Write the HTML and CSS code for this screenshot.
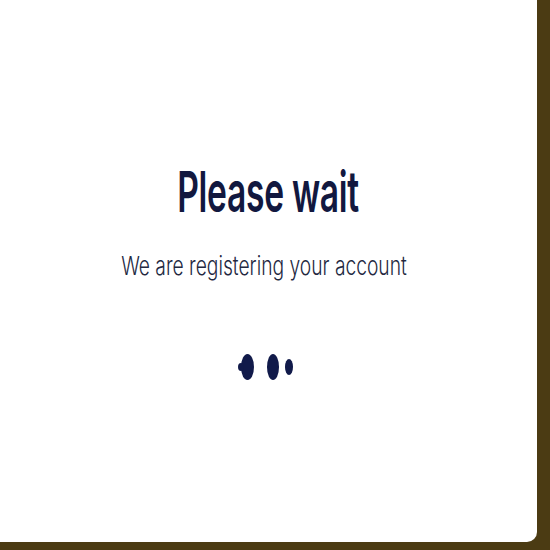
FILE: index.html
```html
<!DOCTYPE html>
<html>
<head>
<meta charset="utf-8">
<link rel="stylesheet" href="styles.css">
</head>
<body>
<div class="card">
  <h1 class="title">Please wait</h1>
  <p class="subtitle">We are registering your account</p>
  <div class="dots">
    <span class="dot dot-a"><span class="ghost"></span></span>
    <span class="dot dot-b"></span>
    <span class="dot dot-c"></span>
  </div>
</div>
</body>
</html>
```
FILE: styles.css
```css
html, body {
  margin: 0;
  padding: 0;
  background: #4b3b13;
  width: 550px;
  height: 550px;
  overflow: hidden;
}
.card {
  width: 537px;
  height: 542px;
  background: #ffffff;
  border-bottom-right-radius: 10px;
  display: flex;
  flex-direction: column;
  align-items: center;
  font-family: "Inter", "Noto Sans", sans-serif;
}
.title {
  margin: 158px 0 0 0;
  font-size: 57px;
  line-height: 68px;
  font-weight: 600;
  color: #12183f;
  transform: scaleX(0.59);
  white-space: nowrap;
  letter-spacing: -0.5px;
}
.subtitle {
  margin: 24px 9px 0 0;
  font-size: 26px;
  line-height: 32px;
  font-weight: 300;
  color: #23283f;
  transform: scaleX(0.74);
  white-space: nowrap;
}
.dots {
  margin-top: 72px;
  display: flex;
  align-items: center;
  gap: 13px;
  height: 26px;
  padding-right: 3px;
}
.dot {
  display: block;
  background: #111a4a;
  border-radius: 50%;
  position: relative;
}
.dot-a { width: 13px; height: 26px; }
.dot-b { width: 12px; height: 26px; }
.dot-c { width: 8px; height: 16px; margin-left: -7px; }
.ghost {
  position: absolute;
  left: -3px;
  top: 9px;
  width: 6px;
  height: 8px;
  border-radius: 50%;
  background: #111a4a;
}
```
